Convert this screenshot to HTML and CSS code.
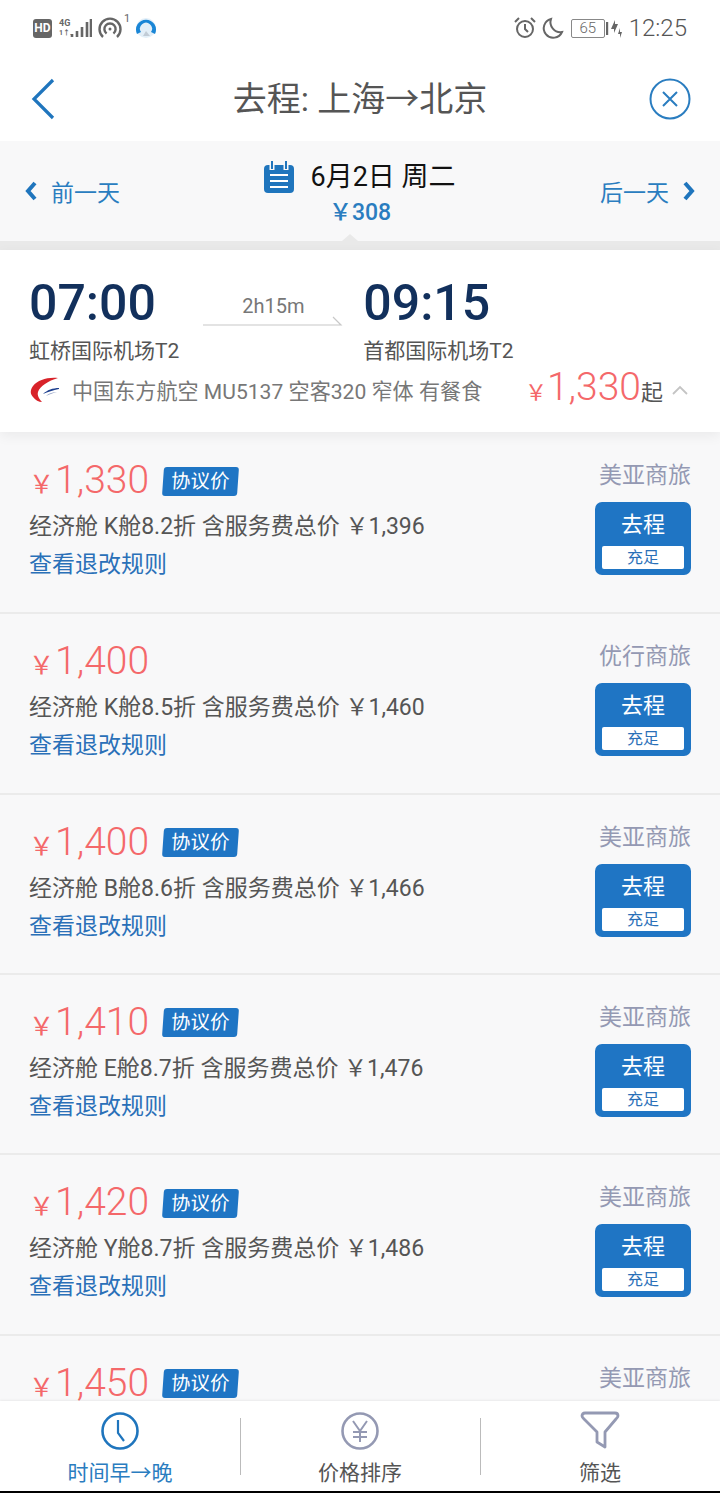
FILE: index.html
```html
<!DOCTYPE html>
<html lang="zh-CN">
<head>
    <meta charset="UTF-8">
    <meta name="viewport" content="width=device-width, initial-scale=1.0">
    <title>去程: 上海→北京</title>
    <link rel="stylesheet" href="styles.css">
</head>
<body>
    <div class="page">
        <div class="status-bar">
            <div class="status-left">
                <span class="hd">HD</span>
                <span class="net"><span>4G</span><span class="net-small">1↑.</span></span>
                <svg class="bars" width="22" height="22" viewBox="0 0 22 22"><path d="M2 17v3M7 14v6M12 10v10M17 5v15M21 2v18" stroke="#666" stroke-width="2.6"/></svg>
                <svg class="hotspot" width="24" height="24" viewBox="0 0 24 24" fill="none" stroke="#666" stroke-width="2.4"><path d="M5 21a10.5 10.5 0 1 1 14 0"/><path d="M8.6 17.5a5.6 5.6 0 1 1 6.8 0"/><circle cx="12" cy="13" r="1.5" fill="#666" stroke="none"/></svg>
                <span class="sup">1</span>
                <svg class="app" width="24" height="24" viewBox="0 0 24 24" fill="none"><circle cx="12" cy="12" r="10" fill="#e3eff8"/><path d="M3 18a10 10 0 1 1 18 0l-4-2a6 6 0 1 0-10 0z" fill="#1a86d6"/><path d="M9 20l3-5 4 5z" fill="#c2ccd6"/></svg>
            </div>
            <div class="status-right">
                <svg width="24" height="24" viewBox="0 0 24 24" fill="none" stroke="#666" stroke-width="2"><circle cx="12" cy="13" r="8"/><path d="M12 8v5l3 3M2 6l4-4M22 6l-4-4"/></svg>
                <svg class="moon" width="24" height="24" viewBox="0 0 24 24" fill="none" stroke="#666" stroke-width="2"><path d="M10 3a9.5 9.5 0 1 0 11 13A10 10 0 0 1 10 3z"/></svg>
                <span class="battery">65</span>
                <svg class="charge" width="18" height="24" viewBox="0 0 18 24"><path d="M1 6v13" stroke="#666" stroke-width="2.4"/><path d="M9 4l-4 9h3v4l4-9H9zM14 12l-2 6h2v4l2-6h-2z" fill="#666"/></svg>
                <span class="clock">12:25</span>
            </div>
        </div>

        <header class="top-bar">
            <svg class="back" width="26" height="42" viewBox="0 0 26 42" fill="none"><path d="M23 2L4 21l19 19" stroke="#1f75bd" stroke-width="3.2"/></svg>
            <h1>去程: 上海→北京</h1>
            <svg class="close" width="42" height="42" viewBox="0 0 42 42" fill="none" stroke="#2a7dc0" stroke-width="2"><circle cx="21" cy="21" r="19.5"/><path d="M14 14l14 14M28 14L14 28"/></svg>
        </header>

        <div class="date-bar">
            <div class="day-link">
                <svg width="14" height="22" viewBox="0 0 14 22" fill="none"><path d="M11 3L4 11l7 8" stroke="#1f75bd" stroke-width="4"/></svg>
                <span>前一天</span>
            </div>
            <div class="date-mid">
                <div class="date-line">
                    <svg width="30" height="32" viewBox="0 0 30 32"><rect y="4" width="30" height="28" rx="4" fill="#1f75bd"/><path d="M8 0v9M22 0v9" stroke="#f8f8f9" stroke-width="5"/><path d="M8 0v8M22 0v8" stroke="#1f75bd" stroke-width="2"/><path d="M6 14h18M6 20h18M6 26h18" stroke="#fff" stroke-width="2"/></svg>
                    <span class="date-text">6月2日 周二</span>
                </div>
                <div class="date-price">￥308</div>
            </div>
            <div class="day-link">
                <span>后一天</span>
                <svg width="14" height="22" viewBox="0 0 14 22" fill="none"><path d="M3 3l7 8-7 8" stroke="#1f75bd" stroke-width="4"/></svg>
            </div>
        </div>
        <div class="band"><span class="notch"></span></div>

        <section class="flight">
            <div class="times">
                <div class="stop">
                    <div class="time">07:00</div>
                    <div class="airport">虹桥国际机场T2</div>
                </div>
                <div class="duration">
                    <span>2h15m</span>
                    <svg width="140" height="10" viewBox="0 0 140 10" fill="none"><path d="M0 9h138l-8-8" stroke="#c8c8c8" stroke-width="1.2"/></svg>
                </div>
                <div class="stop">
                    <div class="time">09:15</div>
                    <div class="airport">首都国际机场T2</div>
                </div>
            </div>
            <div class="flight-info">
                <svg class="airline" width="30" height="26" viewBox="0 0 30 26"><path d="M28 1C17 0 8 3 3 9c-3 4-3 8 0 11 2 3 6 5 9 5-3-3-5-7-4-10C10 9 18 4 28 1z" fill="#d8232a"/><path d="M29 11c-6 0-12 2-16 6 5-2 10-4 16-5z" fill="#1d3f8f"/><path d="M27 15c-4 0-8 1-11 4 4-2 7-3 11-4z" fill="#9aa7c7"/></svg>
                <span class="info-text">中国东方航空 MU5137 空客320 窄体 有餐食</span>
                <span class="from-price"><span class="yen">￥</span><span class="amount">1,330</span><span class="qi">起</span></span>
                <svg class="caret" width="16" height="10" viewBox="0 0 16 10" fill="none"><path d="M1 9l7-7 7 7" stroke="#c4c4c4" stroke-width="1.8"/></svg>
            </div>
        </section>

        <main class="fares">
            <div class="fare first">
                <div class="fare-left">
                    <div class="price-line"><span class="yen">￥</span><span class="amount">1,330</span><span class="tag">协议价</span></div>
                    <div class="desc">经济舱 K舱8.2折 含服务费总价 ￥1,396</div>
                    <div class="rule">查看退改规则</div>
                </div>
                <div class="fare-right">
                    <div class="agent">美亚商旅</div>
                    <div class="book"><span>去程</span><span class="stock">充足</span></div>
                </div>
            </div>
            <div class="fare">
                <div class="fare-left">
                    <div class="price-line"><span class="yen">￥</span><span class="amount">1,400</span></div>
                    <div class="desc">经济舱 K舱8.5折 含服务费总价 ￥1,460</div>
                    <div class="rule">查看退改规则</div>
                </div>
                <div class="fare-right">
                    <div class="agent">优行商旅</div>
                    <div class="book"><span>去程</span><span class="stock">充足</span></div>
                </div>
            </div>
            <div class="fare">
                <div class="fare-left">
                    <div class="price-line"><span class="yen">￥</span><span class="amount">1,400</span><span class="tag">协议价</span></div>
                    <div class="desc">经济舱 B舱8.6折 含服务费总价 ￥1,466</div>
                    <div class="rule">查看退改规则</div>
                </div>
                <div class="fare-right">
                    <div class="agent">美亚商旅</div>
                    <div class="book"><span>去程</span><span class="stock">充足</span></div>
                </div>
            </div>
            <div class="fare">
                <div class="fare-left">
                    <div class="price-line"><span class="yen">￥</span><span class="amount">1,410</span><span class="tag">协议价</span></div>
                    <div class="desc">经济舱 E舱8.7折 含服务费总价 ￥1,476</div>
                    <div class="rule">查看退改规则</div>
                </div>
                <div class="fare-right">
                    <div class="agent">美亚商旅</div>
                    <div class="book"><span>去程</span><span class="stock">充足</span></div>
                </div>
            </div>
            <div class="fare">
                <div class="fare-left">
                    <div class="price-line"><span class="yen">￥</span><span class="amount">1,420</span><span class="tag">协议价</span></div>
                    <div class="desc">经济舱 Y舱8.7折 含服务费总价 ￥1,486</div>
                    <div class="rule">查看退改规则</div>
                </div>
                <div class="fare-right">
                    <div class="agent">美亚商旅</div>
                    <div class="book"><span>去程</span><span class="stock">充足</span></div>
                </div>
            </div>
            <div class="fare">
                <div class="fare-left">
                    <div class="price-line"><span class="yen">￥</span><span class="amount">1,450</span><span class="tag">协议价</span></div>
                </div>
                <div class="fare-right">
                    <div class="agent">美亚商旅</div>
                </div>
            </div>
        </main>

        <nav class="bottom-bar">
            <div class="tab active">
                <svg width="40" height="40" viewBox="0 0 40 40" fill="none" stroke="#1f75bd" stroke-width="2.6"><circle cx="20" cy="20" r="17.5"/><path d="M18 9v13l6 8" stroke-width="2.2"/></svg>
                <span>时间早→晚</span>
            </div>
            <div class="tab">
                <svg width="40" height="40" viewBox="0 0 40 40" fill="none" stroke="#9499b3" stroke-width="2.6"><circle cx="20" cy="20" r="17.5"/><path d="M13 10l7 10 7-10M13 21h14M13 26h14M20 20v11" stroke-width="2"/></svg>
                <span>价格排序</span>
            </div>
            <div class="tab">
                <svg width="40" height="40" viewBox="0 0 40 40" fill="none" stroke="#9499b3" stroke-width="2.8"><path d="M2 5c0-2 1-3 3-3h30c2 0 3 1 3 3 0 1-1 2-2 3L25 21v15l-8-5V21L4 8C3 7 2 6 2 5z" stroke-linejoin="round"/></svg>
                <span>筛选</span>
            </div>
        </nav>
    </div>
</body>
</html>
```

FILE: styles.css
```css
body {
    margin: 0;
    background-color: #000;
    font-family: Roboto, 'Noto Sans CJK SC', sans-serif;
    color: #555;
}

.page {
    display: flex;
    flex-direction: column;
    height: 1491px;
    overflow: hidden;
    background-color: #fff;
}

.status-bar {
    display: flex;
    justify-content: space-between;
    align-items: center;
    height: 56px;
    padding: 0 33px;
    flex: none;
}

.status-left,
.status-right {
    display: flex;
    align-items: center;
}

.hd {
    width: 19px;
    height: 19px;
    border-radius: 3px;
    background-color: #666;
    color: #fff;
    font-size: 12px;
    font-weight: 700;
    line-height: 19px;
    text-align: center;
}

.net {
    display: flex;
    flex-direction: column;
    margin-left: 7px;
    font-size: 9px;
    font-weight: 700;
    line-height: 10px;
    color: #666;
}

.net-small {
    font-size: 7px;
}

.bars {
    margin-left: -2px;
}

.hotspot {
    margin-left: 6px;
}

.sup {
    align-self: flex-start;
    margin: -4px 4px 0 2px;
    font-size: 11px;
    color: #666;
}

.moon {
    margin-left: 4px;
}

.battery {
    width: 32px;
    height: 17px;
    margin-left: 6px;
    border: 1px solid #888;
    border-radius: 2px;
    font-size: 15px;
    font-weight: 300;
    line-height: 17px;
    text-align: center;
    color: #666;
}

.charge {
    margin-left: 1px;
}

.clock {
    margin-left: 5px;
    font-size: 24px;
    font-weight: 300;
    color: #555;
}

.top-bar {
    display: flex;
    justify-content: space-between;
    align-items: center;
    height: 85px;
    padding: 0 29px 0 30px;
    flex: none;
}

.top-bar h1 {
    margin: 0 0 4px 15px;
    font-size: 34px;
    font-weight: 400;
    color: #555;
}

.date-bar {
    display: flex;
    justify-content: space-between;
    align-items: center;
    height: 100px;
    padding: 0 24px;
    background-color: #f8f8f9;
    flex: none;
}

.day-link {
    display: flex;
    align-items: center;
    gap: 13px;
    font-size: 23px;
    color: #2a7dc0;
}

.date-mid {
    display: flex;
    flex-direction: column;
    align-items: center;
    padding-top: 3px;
}

.date-line {
    display: flex;
    align-items: center;
    gap: 16px;
}

.date-text {
    font-size: 27px;
    color: #111;
    line-height: 36px;
}

.date-price {
    margin-top: -2px;
    font-size: 23px;
    font-weight: 500;
    color: #2a7dc0;
}

.band {
    position: relative;
    height: 9px;
    background-color: #e9e9e9;
    flex: none;
}

.notch {
    position: absolute;
    left: 342px;
    top: -7px;
    border-left: 8px solid transparent;
    border-right: 8px solid transparent;
    border-bottom: 7px solid #e9e9e9;
}

.flight {
    height: 182px;
    padding: 0 30px 0 29px;
    flex: none;
    background-color: #fff;
    box-sizing: border-box;
    box-shadow: 0 4px 12px rgba(0, 0, 0, 0.06);
    position: relative;
}

.times {
    display: flex;
    padding-top: 23px;
}

.time {
    font-size: 50px;
    font-weight: 500;
    line-height: 60px;
    color: #12305c;
}

.airport {
    margin-top: 3px;
    font-size: 21px;
    line-height: 30px;
    color: #555;
}

.duration {
    display: flex;
    flex-direction: column;
    align-items: center;
    width: 140px;
    margin: 0 20px 0 24px;
    padding-top: 21px;
    font-size: 20px;
    color: #777;
}

.duration svg {
    margin-top: -2px;
}

.flight-info {
    display: flex;
    align-items: center;
    margin-top: -2px;
}

.airline {
    margin-left: 1px;
}

.info-text {
    margin-left: 12px;
    font-size: 21.1px;
    white-space: nowrap;
    color: #777;
}

.from-price {
    display: flex;
    align-items: baseline;
    margin-left: auto;
    margin-bottom: 6px;
    color: #f4686a;
}

.from-price .yen {
    font-size: 22px;
}

.from-price .amount {
    font-size: 39px;
    font-weight: 300;
}

.qi {
    font-size: 22px;
    color: #555;
}

.caret {
    margin: 0 2px 0 9px;
}

.fares {
    flex: 1;
    overflow: hidden;
    background-color: #f8f8f9;
}

.fare {
    display: flex;
    justify-content: space-between;
    height: 180.33px;
    padding: 25px 29px 0 29px;
    border-top: 2px solid #ebebeb;
    box-sizing: border-box;
}

.fare.first {
    border-top: none;
    padding-top: 26px;
}

.price-line {
    display: flex;
    align-items: baseline;
    height: 52px;
    margin-top: -1px;
    color: #f4686a;
}

.price-line .yen {
    font-size: 25px;
}

.price-line .amount {
    margin-left: 1px;
    font-size: 39px;
    font-weight: 300;
}

.tag {
    align-self: center;
    margin: 0 0 4px 14px;
    padding: 0 8px;
    background-color: #1f75c4;
    border-radius: 3px;
    color: #fff;
    font-size: 19.5px;
    line-height: 29px;
    transform: skewX(-4deg);
}

.desc {
    font-size: 23px;
    line-height: 36px;
    color: #555;
}

.rule {
    margin-top: 3px;
    font-size: 23px;
    line-height: 34px;
    color: #2a70b8;
}

.fare-right {
    display: flex;
    flex-direction: column;
    align-items: flex-end;
}

.agent {
    margin-top: 1px;
    font-size: 23px;
    line-height: 34px;
    color: #9499b3;
}

.book {
    display: flex;
    flex-direction: column;
    align-items: center;
    width: 96px;
    height: 73px;
    margin-top: 9px;
    padding-top: 1px;
    box-sizing: border-box;
    background-color: #1f75c4;
    border-radius: 7px;
    color: #fff;
    font-size: 22px;
    line-height: 43px;
}

.stock {
    width: 82px;
    height: 23px;
    border-radius: 2px;
    background-color: #fff;
    color: #2a70b8;
    font-size: 16px;
    line-height: 23px;
    text-align: center;
}

.bottom-bar {
    display: flex;
    height: 90px;
    flex: none;
    background-color: #fff;
    box-shadow: 0 -1px 2px rgba(0, 0, 0, 0.06);
    position: relative;
}

.tab {
    display: flex;
    flex: 1;
    flex-direction: column;
    align-items: center;
    padding-top: 10px;
    font-size: 21px;
    line-height: 28px;
    color: #555;
    position: relative;
}

.tab span {
    margin-top: 8px;
}

.tab.active {
    color: #2a7dc0;
}

.tab + .tab::before {
    content: "";
    position: absolute;
    left: 0;
    top: 17px;
    height: 57px;
    border-left: 1px solid #bbb;
}
```
